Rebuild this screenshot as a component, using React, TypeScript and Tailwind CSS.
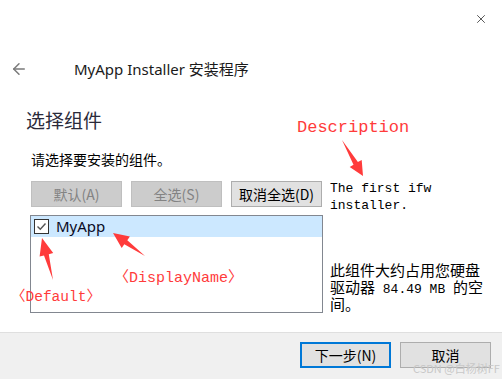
import { ArrowLeft, X } from 'lucide-react'

const ui = { fontFamily: '"Noto Sans", "Noto Sans CJK SC", sans-serif' }
const cjk = { fontFamily: '"Noto Sans CJK SC", sans-serif' }
const mono = { fontFamily: '"Liberation Mono", "Noto Sans CJK SC", monospace' }

const red = '#ff3b3b'

function Annotations() {
  return (
    <>
      <svg className="absolute left-0 top-0 pointer-events-none" width="502" height="379">
        <polygon fill={red} points="342,140 357.9,162.1 361.7,159.9 363,176 349.7,166.9 353.5,164.7" />
        <polygon fill={red} points="53,280 48.8,254.2 53.2,253 42,238 39.6,256.6 44,255.4" />
        <polygon fill={red} points="145,256 127.3,240.2 129.9,236.5 113,233 121.7,247.9 124.3,244.2" />
      </svg>
      <span className="absolute left-[297px] top-[119px] text-[17px] leading-none" style={{ ...mono, color: red }}>
        Description
      </span>
      <span className="absolute left-[114px] top-[271px] text-[15px] leading-none" style={{ ...mono, color: red }}>
        〈DisplayName〉
      </span>
      <span className="absolute left-[11px] top-[290px] text-[14.5px] leading-none" style={{ ...mono, color: red }}>
        〈Default〉
      </span>
      <span className="absolute left-[413px] top-[363px] text-[11px] leading-none text-[#c8c8c8]" style={cjk}>
        CSDN @白杨树FF
      </span>
    </>
  )
}

function Btn({ label, disabled, focused }: { label: string; disabled?: boolean; focused?: boolean }) {
  const tone = disabled
    ? 'bg-[#cccccc] border border-[#bfbfbf] text-[#838383]'
    : focused
      ? 'bg-[#e1e1e1] border-2 border-[#0078d7] text-black'
      : 'bg-[#e1e1e1] border border-[#adadad] text-black'
  return (
    <div className={`w-[91px] h-[26px] flex items-center justify-center text-[14px] ${tone}`} style={cjk}>
      {label}
    </div>
  )
}

export default function App() {
  return (
    <div className="relative w-[502px] h-[379px] bg-white overflow-hidden" style={ui}>
      <div className="h-[332px]">
        <div className="h-[44px] flex justify-end pt-[12px] pr-[14px]">
          <X className="w-[14px] h-[14px] text-[#333]" strokeWidth={1.4} />
        </div>
        <div className="h-[50px] flex items-center">
          <ArrowLeft className="ml-[10px] w-[18px] h-[18px] text-[#7a7a7a]" strokeWidth={2} />
          <span className="ml-[46px] text-[15px] text-[#1a1a1a]">MyApp Installer 安装程序</span>
        </div>
        <div className="mt-[14px] pl-[26px] text-[19px] leading-[24px] text-[#2a2a3a]" style={cjk}>
          选择组件
        </div>
        <div className="flex pl-[30px]">
          <div className="w-[293px]">
            <div className="mt-[17px] pl-[1px] text-[14px] leading-[20px] text-black" style={cjk}>
              请选择要安装的组件。
            </div>
            <div className="mt-[12px] flex gap-[9px] pl-[1px]">
              <Btn label="默认(A)" disabled />
              <Btn label="全选(S)" disabled />
              <Btn label="取消全选(D)" />
            </div>
            <div className="mt-[8px] h-[98px] border border-[#828790]">
              <div className="h-[21px] bg-[#cce8ff] flex items-center pl-[3px]">
                <div className="w-[15px] h-[15px] border border-[#333] bg-white flex items-center justify-center">
                  <svg width="11" height="11" viewBox="0 0 11 11">
                    <path d="M1.5 5.5 L4.3 8.3 L9.5 2.5" fill="none" stroke="#555" strokeWidth="1.4" />
                  </svg>
                </div>
                <span className="ml-[7px] text-[15px] text-[#0a0a1e]">MyApp</span>
              </div>
            </div>
          </div>
          <div className="ml-[7px] pt-[48px] text-[13px] leading-[17px] text-black whitespace-nowrap" style={mono}>
            <div>The first ifw</div>
            <div>installer.</div>
            <div className="mt-[50px]">
              <div className="text-[15px]">此组件大约占用您硬盘</div>
              <div>
                <span className="text-[15px]">驱动器</span> 84.49 MB <span className="text-[15px]">的空</span>
              </div>
              <div className="text-[15px]">间。</div>
            </div>
          </div>
        </div>
      </div>
      <div className="h-[47px] border-t border-[#dfdfdf] bg-[#f0f0f0] flex justify-end items-start pt-[9px] pr-[11px] gap-[9px]">
        <Btn label="下一步(N)" focused />
        <Btn label="取消" />
      </div>
      <Annotations />
    </div>
  )
}
